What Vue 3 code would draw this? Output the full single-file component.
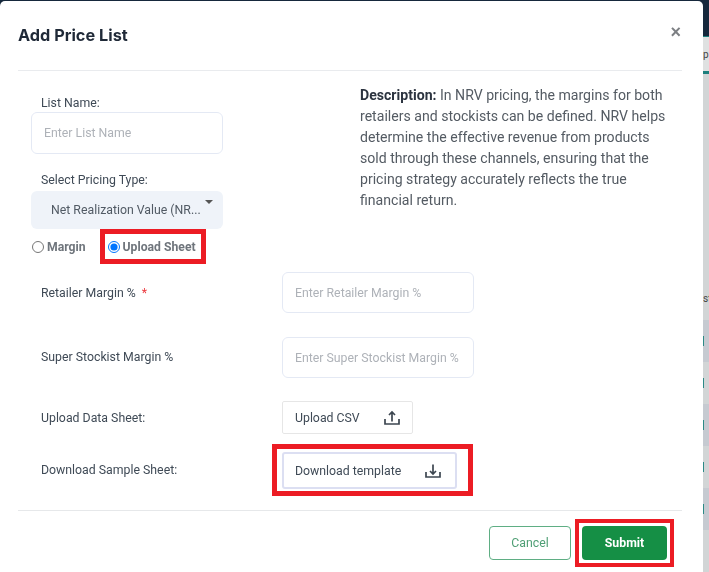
<script setup>
const description = 'In NRV pricing, the margins for both retailers and stockists can be defined. NRV helps determine the effective revenue from products sold through these channels, ensuring that the pricing strategy accurately reflects the true financial return.'
const stripes = ['#c6cad1', '#d2d5d6', '#c6cad1', '#d2d5d6', '#c6cad1', '#d2d5d6']
</script>

<template>
  <div class="page">
    <main class="modal">
      <header class="head">
        <h1>Add Price List</h1>
        <span class="close">×</span>
      </header>

      <section class="top">
        <div class="left">
          <label class="cap">List Name:</label>
          <input class="field" placeholder="Enter List Name" />
          <label class="cap cap-select">Select Pricing Type:</label>
          <div class="select">
            <span>Net Realization Value (NR...</span>
            <i class="caret"></i>
          </div>
          <div class="radios">
            <label class="radio"><input type="radio" name="mode" /><span>Margin</span></label>
            <label class="radio mark"><input type="radio" name="mode" checked /><span>Upload Sheet</span></label>
          </div>
        </div>
        <p class="desc"><b>Description:</b> {{ description }}</p>
      </section>

      <section class="rows">
        <div class="row row-a">
          <label>Retailer Margin % <em>*</em></label>
          <input class="field wide" placeholder="Enter Retailer Margin %" />
        </div>
        <div class="row row-b">
          <label>Super Stockist Margin %</label>
          <input class="field wide" placeholder="Enter Super Stockist Margin %" />
        </div>
        <div class="row row-c">
          <label>Upload Data Sheet:</label>
          <button class="file upload">
            <span>Upload CSV</span>
            <svg width="16" height="16" viewBox="0 0 16 16" fill="none" stroke="#3c4650" stroke-width="1.7">
              <path d="M1 9v5h14V9M8 11.500V2M5 5l3-3 3 3" />
            </svg>
          </button>
        </div>
        <div class="row row-d">
          <label>Download Sample Sheet:</label>
          <div class="mark-box">
            <button class="file download">
              <span>Download template</span>
              <svg width="16" height="16" viewBox="0 0 16 16" fill="none" stroke="#3c4650" stroke-width="1.7">
                <path d="M1 9v5h14V9M8 1.500V11M5 8l3 3 3-3" />
              </svg>
            </button>
          </div>
        </div>
      </section>

      <footer class="foot">
        <button class="cancel">Cancel</button>
        <div class="mark-submit"><button class="submit">Submit</button></div>
      </footer>
    </main>

    <aside class="behind">
      <div class="nav"></div>
      <div class="tab">p</div>
      <div class="teal"></div>
      <div class="plain"><span>st</span></div>
      <div v-for="(c, i) in stripes" :key="i" class="stripe" :style="{ background: c }"><i v-if="i < 5"></i></div>
    </aside>
  </div>
</template>

<style>
html, body { margin: 0; background: #fff; overflow: hidden; }
</style>

<style scoped>
.page {
  width: 709px;
  height: 572px;
  display: flex;
  overflow: hidden;
  background: #16283c;
  font-family: Roboto, "Liberation Sans", sans-serif;
  color: #3f4a56;
}
.modal {
  width: 703px;
  height: 580px;
  margin-top: 1px;
  flex: none;
  box-sizing: border-box;
  padding: 0 21px 0 18px;
  background: #fff;
  border-radius: 5px 5px 0 0;
}
.head {
  height: 70px;
  display: flex;
  justify-content: space-between;
  align-items: center;
  box-sizing: border-box;
  border-bottom: 1px solid #e9ebee;
}
.head h1 {
  margin: -2px 0 0;
  font: 700 16.3px Inter, sans-serif;
  color: #1f2937;
  filter: blur(0.6px);
}
.close {
  font: 700 18px "Liberation Sans", sans-serif;
  color: #7c7f83;
  margin: -6px 1px 0 0;
  filter: blur(0.5px);
}
.top {
  display: flex;
  height: 201px;
}
.left {
  width: 192px;
  margin-left: 13px;
  padding-top: 25px;
}
.cap {
  display: block;
  font-size: 12.3px;
  line-height: 14px;
  height: 16px;
  padding-left: 10px;
  color: #3f4a56;
  filter: blur(0.6px);
}
.cap-select { margin-top: 19px; height: 18px; }
.field {
  display: block;
  width: 192px;
  height: 42px;
  box-sizing: border-box;
  padding: 0 12px;
  border: 1px solid #e4e9f4;
  border-radius: 6px;
  outline: none;
  background: #fff;
  font: 12.3px Roboto, sans-serif;
  color: #3f4a56;
  filter: blur(0.5px);
}
.field::placeholder { color: #aeb2b8; opacity: 1; }
.select {
  height: 38px;
  box-sizing: border-box;
  padding: 0 10px 0 20px;
  display: flex;
  align-items: center;
  justify-content: space-between;
  background: #eff3f9;
  border-radius: 6px;
  font-size: 12.3px;
  color: #515a64;
  white-space: nowrap;
  filter: blur(0.5px);
}
.caret {
  align-self: flex-start;
  margin-top: 9px;
  border: 4px solid transparent;
  border-top: 4px solid #555;
  border-bottom: 0;
}
.radios {
  display: flex;
  align-items: center;
  height: 35px;
  margin-left: 1px;
}
.radio {
  display: flex;
  align-items: center;
  font-size: 12.2px;
  font-weight: 700;
  color: #6f757c;
  white-space: nowrap;
}
.radio input { width: 12px; height: 12px; margin: 0 3px 0 0; filter: blur(0.4px); }
.radio span { filter: blur(0.7px); }
.mark {
  margin-left: 19px;
  padding: 0 5px 0 3px;
  height: 25px;
  outline: 5px solid #ec1c24;
}
.desc {
  width: 312px;
  margin: 14px 0 0 137px;
  font-size: 14.1px;
  line-height: 21px;
  color: #545b63;
  filter: blur(0.6px);
}
.desc b { color: #2c3440; font-weight: 700; }
.rows { height: 238px; padding-left: 23px; border-bottom: 1px solid #e6e8ea; }
.row {
  display: grid;
  grid-template-columns: 241px auto;
  justify-content: start;
  align-items: center;
  font-size: 12.3px;
}
.row label { color: #3f4a56; filter: blur(0.6px); }
.row em { font-style: normal; color: #ec3a3f; margin-left: 3px; }
.wide { height: 41px; }
.row-a { height: 41px; }
.row-b { height: 41px; margin-top: 24px; }
.row-b label, .row-d label { padding-bottom: 2px; }
.row-c { height: 33px; margin-top: 23px; }
.row-d { height: 37px; margin-top: 18px; }
.file {
  display: flex;
  align-items: center;
  justify-content: space-between;
  box-sizing: border-box;
  background: #fff;
  font: 12.3px Roboto, sans-serif;
  color: #3f4a56;
  padding: 0 12px;
  filter: blur(0.5px);
}
.upload { width: 131px; height: 33px; border: 1px solid #e6e6e6; border-radius: 2px; }
.download { width: 175px; height: 37px; border: 2px solid #dcdff2; border-radius: 3px; padding: 0 14px 0 11px; }
.mark-box {
  width: 175px;
  height: 37px;
  padding: 3px 11px 2px 5px;
  margin: -8px -16px -7px -10px;
  border: 5px solid #ec1c24;
  box-sizing: content-box;
}
.foot {
  display: flex;
  justify-content: flex-end;
  align-items: flex-start;
  gap: 11px;
  padding: 15px 15px 0 0;
}
.foot button {
  width: 82px;
  height: 34px;
  box-sizing: border-box;
  border-radius: 4px;
  font: 12.3px Roboto, sans-serif;
  filter: blur(0.5px);
}
.cancel { background: #fff; border: 1.5px solid #5fae84; color: #4f9f75; }
.foot .submit { width: 85px; background: #158f45; border: 0; color: #fff; font-weight: 700; }
.mark-submit { outline: 4.5px solid #ec1c24; outline-offset: 3.5px; height: 34px; }
.behind { flex: 1; display: flex; flex-direction: column; font-size: 10px; color: #444; overflow: hidden; }
.nav { height: 41px; background: #16283c; border-bottom: 1px solid #1d7f7d; }
.tab { height: 34px; background: #dfe1e1; line-height: 36px; }
.teal { height: 4px; background: #1d7f7d; }
.plain { height: 250px; background: #d2d5d6; padding-top: 219px; box-sizing: border-box; }
.plain span { display: block; }
.stripe { height: 42px; flex: none; display: flex; align-items: center; }
.stripe i { width: 1px; height: 10px; background: #2b8a86; }
</style>
